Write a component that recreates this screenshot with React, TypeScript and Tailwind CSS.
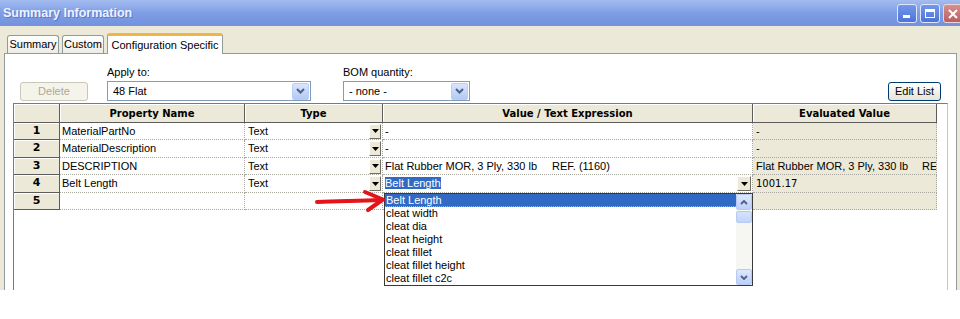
import React from 'react';

interface Row {
  n: number;
  name: string;
  type: string;
  h: string;
}

const rows: Row[] = [
  { n: 1, name: 'MaterialPartNo', type: 'Text', h: 'h-[17px]' },
  { n: 2, name: 'MaterialDescription', type: 'Text', h: 'h-[18px]' },
  { n: 3, name: 'DESCRIPTION', type: 'Text', h: 'h-[17px]' },
  { n: 4, name: 'Belt Length', type: 'Text', h: 'h-[18px]' },
  { n: 5, name: '', type: '', h: 'h-[17px]' },
];

const listItems = [
  'Belt Length',
  'cleat width',
  'cleat dia',
  'cleat height',
  'cleat fillet',
  'cleat fillet height',
  'cleat fillet c2c',
];

// маленькая кнопка со стрелкой вниз в ячейке таблицы
const CellDrop: React.FC<{ w: string }> = ({ w }) => (
  <div
    className={`${w} h-[15px] shrink-0 flex items-center justify-center bg-[#ece9d8] border-t border-l border-t-white border-l-white border-b border-r border-b-[#716f64] border-r-[#716f64]`}
  >
    <svg width="7" height="4" viewBox="0 0 7 4">
      <path d="M0 0h7L3.5 4z" fill="#000" />
    </svg>
  </div>
);

// XP кнопка выпадающего списка
const ComboArrow: React.FC = () => (
  <div className="w-[17px] h-[17px] shrink-0 m-[1px] rounded-[2px] border border-[#b9cdf7] bg-linear-to-b from-[#dbe5fd] to-[#b3c9f5] flex items-center justify-center">
    <svg width="9" height="6" viewBox="0 0 9 6">
      <path d="M1 1l3.5 3.5L8 1" stroke="#4d6185" strokeWidth="2" fill="none" />
    </svg>
  </div>
);

const Combo: React.FC<{ w: string; text: string }> = ({ w, text }) => (
  <div className={`${w} h-[20px] border border-[#7f9db9] bg-white flex items-center`}>
    <span className="flex-1 pl-[5px]">{text}</span>
    <ComboArrow />
  </div>
);

const ScrollBtn: React.FC<{ up?: boolean }> = ({ up }) => (
  <div className="w-[16px] h-[16px] rounded-[2px] border border-[#b7caf5] bg-linear-to-b from-[#dfe8fd] to-[#bccff8] flex items-center justify-center">
    <svg width="8" height="5" viewBox="0 0 8 5">
      <path d={up ? 'M1 4l3-3 3 3' : 'M1 1l3 3 3-3'} stroke="#4d6185" strokeWidth="1.8" fill="none" />
    </svg>
  </div>
);

const App: React.FC = () => {
  const hdr =
    "flex items-center justify-center border-r border-b border-[#5c5c5c] bg-[#ece9d8] shadow-[inset_1px_1px_0_#fff] font-bold text-[10px] font-['DejaVu_Sans',Verdana,sans-serif]";
  const cell = 'flex items-center border-r border-b border-dotted border-[#a9a8a0] overflow-hidden whitespace-nowrap';
  const tab =
    'h-[18px] flex items-center justify-center border border-b-0 border-[#919b9c] rounded-t-[3px] bg-linear-to-b from-white to-[#ecebe6]';

  return (
    <div className="w-[960px] h-[319px] bg-white overflow-hidden relative text-[11px] text-black font-['Liberation_Sans',Arial,sans-serif]">
      <div className="h-[290px] flex flex-col bg-[#ece9d8]">
        {/* Заголовок окна */}
        <div className="h-[26px] shrink-0 flex items-center bg-linear-to-b from-[#a3bcf0] via-[#7f9de4] to-[#7292df] pl-[3px]">
          <span className="flex-1 font-bold text-[12.5px] text-[#eef3fd] [text-shadow:1px_1px_0_#5b78c8]">Summary Information</span>
          <div className="flex items-center gap-[3px] mt-[1px]">
            <div className="w-[20px] h-[19px] rounded-[3px] border border-[#dfe7fb] bg-linear-to-b from-[#7497ec] to-[#4d73d8] flex items-end justify-start pl-[5px] pb-[4px]">
              <div className="w-[7px] h-[3px] bg-white" />
            </div>
            <div className="w-[20px] h-[19px] rounded-[3px] border border-[#dfe7fb] bg-linear-to-b from-[#7497ec] to-[#4d73d8] flex items-center justify-center">
              <div className="w-[10px] h-[9px] border border-white border-t-[3px]" />
            </div>
            <div className="w-[21px] h-[19px] rounded-[3px] border border-[#eed6d6] bg-linear-to-b from-[#d88f8f] to-[#b85f63] flex items-center justify-start pl-[3px] -mr-[4px]">
              <svg width="12" height="12" viewBox="0 0 12 12">
                <path d="M2 2l8 8M10 2l-8 8" stroke="#fff" strokeWidth="2" />
              </svg>
            </div>
          </div>
        </div>

        <div className="flex-1 flex flex-col pl-[4px] pr-[3px] pt-[7px]">
          {/* Вкладки */}
          <div className="h-[20px] shrink-0 flex items-end pl-[3px] relative z-10">
            <div className={`${tab} w-[52px] mr-[3px]`}>Summary</div>
            <div className={`${tab} w-[42px] mr-[3px]`}>Custom</div>
            <div className="h-[21px] -mb-px w-[116px] flex items-center justify-center border-x border-[#919b9c] border-t-[3px] border-t-[#f2b544] rounded-t-[3px] bg-white">
              Configuration Specific
            </div>
          </div>

          {/* Панель */}
          <div className="flex-1 flex flex-col border border-b-0 border-[#919b9c] bg-white px-[8px] pt-[12px]">
            <div className="flex items-end shrink-0">
              <div className="ml-[7px] w-[68px] h-[19px] rounded-[3px] border border-[#c9c7ba] bg-[#f5f4ea] text-[#aca899] flex items-center justify-center">
                Delete
              </div>
              <div className="ml-[19px] flex flex-col">
                <span className="h-[13px] leading-[13px] mb-[2px]">Apply to:</span>
                <Combo w="w-[204px]" text="48 Flat" />
              </div>
              <div className="ml-[32px] flex flex-col">
                <span className="h-[13px] leading-[13px] mb-[2px]">BOM quantity:</span>
                <Combo w="w-[127px]" text="- none -" />
              </div>
              <div className="ml-auto mr-[7px] w-[53px] h-[19px] rounded-[3px] border border-[#003c74] bg-linear-to-b from-white to-[#e6e3d6] flex items-center justify-center">
                Edit List
              </div>
            </div>

            {/* Таблица */}
            <div className="mt-[2px] flex-1 border-l border-t border-[#7a7a7a] border-r border-r-[#c8c6bc] bg-white flex flex-col">
              <div className="flex h-[19px] shrink-0">
                <div className={`${hdr} w-[46px]`} />
                <div className={`${hdr} w-[185px]`}>Property Name</div>
                <div className={`${hdr} w-[138px]`}>Type</div>
                <div className={`${hdr} w-[370px]`}>Value / Text Expression</div>
                <div className={`${hdr} w-[184px]`}>Evaluated Value</div>
              </div>
              {rows.map(r => (
                <div key={r.n} className={`flex shrink-0 ${r.h}`}>
                  <div className={`${hdr} w-[46px] text-[11px]`}>{r.n}</div>
                  <div className={`${cell} w-[185px] pl-[2px]`}>{r.name}</div>
                  <div className={`${cell} w-[138px] pl-[3px] pr-[1px] justify-between`}>
                    <span>{r.type}</span>
                    {r.type && <CellDrop w="w-[12px]" />}
                  </div>
                  <div className={`${cell} w-[370px] pl-[2px] pr-[1px]`}>
                    {r.n <= 2 && <span>-</span>}
                    {r.n === 3 && (
                      <>
                        <span className="inline-block w-[167px] shrink-0">Flat Rubber MOR, 3 Ply, 330 lb</span>
                        <span>REF. (1160)</span>
                      </>
                    )}
                    {r.n === 4 && (
                      <>
                        <span className="flex-1">
                          <span className="bg-[#316ac5] text-white">Belt Length</span>
                        </span>
                        <CellDrop w="w-[14px]" />
                      </>
                    )}
                  </div>
                  <div className={`${cell} w-[184px] pl-[3px] bg-[#ece9d8]`}>
                    {r.n <= 2 && <span>-</span>}
                    {r.n === 3 && (
                      <>
                        <span className="inline-block w-[166px] shrink-0">Flat Rubber MOR, 3 Ply, 330 lb</span>
                        <span>RE</span>
                      </>
                    )}
                    {r.n === 4 && <span className="font-['DejaVu_Sans',Verdana,sans-serif] text-[10px]">1001.17</span>}
                  </div>
                </div>
              ))}
            </div>
          </div>
        </div>
      </div>

      {/* Выпадающий список */}
      <div className="absolute left-[384px] top-[193px] w-[369px] h-[93px] border border-[#3a3a3a] bg-white flex">
        <div className="flex-1 flex flex-col">
          {listItems.map((t, i) => (
            <div
              key={t}
              className={`h-[13px] leading-[13px] pl-[1px] whitespace-nowrap ${
                i === 0 ? 'bg-[#316ac5] text-white border-b border-dotted border-[#9cb4e0]' : ''
              }`}
            >
              {t}
            </div>
          ))}
        </div>
        <div className="w-[16px] bg-[#f6f6f2] flex flex-col">
          <ScrollBtn up />
          <div className="w-[16px] h-[12px] mt-[1px] rounded-[2px] border border-[#b7caf5] bg-linear-to-b from-[#d6e2fc] to-[#c2d3f8]" />
          <div className="flex-1" />
          <ScrollBtn />
        </div>
      </div>

      {/* Красная стрелка */}
      <svg className="absolute left-[314px] top-[189px]" width="74" height="24" viewBox="0 0 74 24">
        <path d="M3 13 C 25 12, 45 12, 66 11" stroke="#e3151b" strokeWidth="4" fill="none" strokeLinecap="round" />
        <path d="M51 3 L69 10.5 L54 21" stroke="#e3151b" strokeWidth="4" fill="none" strokeLinecap="round" strokeLinejoin="round" />
      </svg>
    </div>
  );
};

export default App;
